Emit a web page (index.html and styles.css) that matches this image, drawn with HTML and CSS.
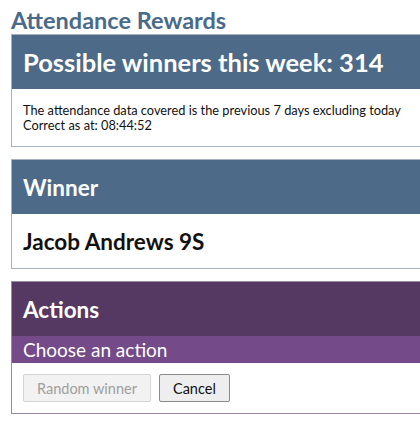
FILE: index.html
```html
<!DOCTYPE html>
<html>
<head>
<meta charset="utf-8">
<link rel="stylesheet" href="styles.css">
</head>
<body>
<div class="page">
  <h1 class="title">Attendance Rewards</h1>
  <section class="panel panel-blue">
    <div class="panel-head"><h2>Possible winners this week: 314</h2></div>
    <div class="panel-body info">
      <p>The attendance data covered is the previous 7 days excluding today</p>
      <p>Correct as at: 08:44:52</p>
    </div>
  </section>
  <section class="panel panel-blue">
    <div class="panel-head"><h2 class="h-small">Winner</h2></div>
    <div class="panel-body winner">Jacob Andrews 9S</div>
  </section>
  <section class="panel panel-purple">
    <div class="panel-head"><h2 class="h-small">Actions</h2></div>
    <div class="panel-sub">Choose an action</div>
    <div class="panel-body actions">
      <button class="btn" disabled>Random winner</button>
      <button class="btn">Cancel</button>
    </div>
  </section>
</div>
</body>
</html>
```
FILE: styles.css
```css
html, body { margin: 0; padding: 0; background: #fff; }
body { font-family: Lato, "Open Sans", sans-serif; color: #111; }
.page { padding: 6px 0 0 11px; width: 409px; }
.title { margin: 0; height: 28px; font-size: 23.5px; line-height: 28px; font-weight: 700; color: #4a6a8a; }
.panel { border: 1px solid #a6b1bf; border-right: none; margin-bottom: 12px; }
.panel-blue .panel-head { background: #4d6b88; }
.panel-purple { border-color: #9a8aa4; }
.panel-purple .panel-head { background: #553963; }
.panel-head { padding: 0 11px; height: 54px; display: flex; align-items: center; color: #fff; white-space: nowrap; }
.panel-head h2 { margin: 0; font-size: 25.5px; font-weight: 700; }
.panel-head h2.h-small { font-size: 22.5px; }
.panel-body { padding: 0 11px; }
.info { height: 57px; display: flex; flex-direction: column; justify-content: center; font-size: 12.8px; line-height: 15px; white-space: nowrap; }
.info p { margin: 0; }
.winner { height: 54px; display: flex; align-items: center; font-size: 22.5px; font-weight: 700; }
.panel-sub { background: #744a88; color: #fff; height: 27px; line-height: 27px; padding: 0 11px; font-size: 19px; }
.actions { height: 50px; display: flex; align-items: center; gap: 8px; }
.btn { font-family: inherit; font-size: 14.5px; height: 28px; padding: 0 13px; border: 1px solid #8a8a8a; border-radius: 2px; background: #eeeeee; color: #111; }
.btn[disabled] { border-color: #d4d4d4; background: #f2f2f2; color: #9e9e9e; }
```
